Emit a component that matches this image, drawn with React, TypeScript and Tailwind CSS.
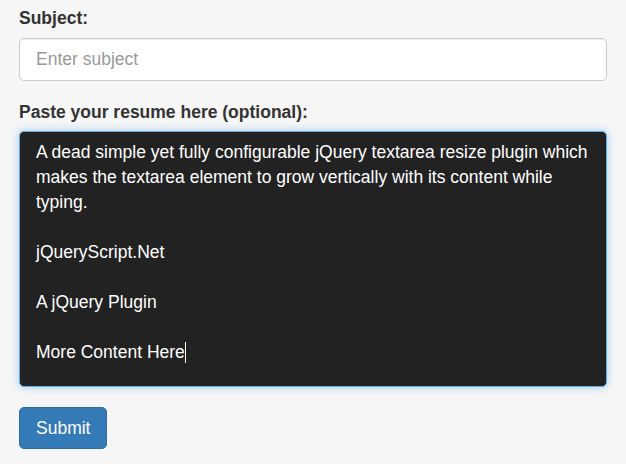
export default function App() {
  return (
    <div
      className="min-h-[464px] w-full bg-[#f6f6f6] px-[19px] pt-[6px] text-[#333333]"
      style={{ fontFamily: '"Liberation Sans", Arial, sans-serif' }}
    >
      <label className="block text-[17.5px] font-bold leading-[25px] mb-[7px]">Subject:</label>
      <div className="h-[43px] w-[588px] rounded-[5px] border border-[#cccccc] bg-white px-[16px] flex items-center text-[17.5px] text-[#999999] shadow-[inset_0_1px_1px_rgba(0,0,0,0.075)]">
        Enter subject
      </div>
      <label className="block text-[17.5px] font-bold leading-[25px] mt-[19px] mb-[6px]">
        Paste your resume here (optional):
      </label>
      <div className="h-[256px] w-[588px] rounded-[5px] border border-[#66afe9] bg-[#222222] px-[16px] pt-[7.5px] text-[17.5px] leading-[25px] text-white shadow-[inset_0_1px_1px_rgba(0,0,0,0.075),0_0_8px_rgba(102,175,233,0.6)]">
        <div className="whitespace-nowrap">A dead simple yet fully configurable jQuery textarea resize plugin which</div>
        <div className="whitespace-nowrap">makes the textarea element to grow vertically with its content while</div>
        <div>typing.</div>
        <div>&nbsp;</div>
        <div>jQueryScript.Net</div>
        <div>&nbsp;</div>
        <div>A jQuery Plugin</div>
        <div>&nbsp;</div>
        <div className="flex items-center">
          <span>More Content Here</span>
          <span className="inline-block w-px h-[21px] bg-white"></span>
        </div>
      </div>
      <button className="mt-[20px] h-[42px] rounded-[5px] border border-[#2e6da4] bg-[#337ab7] px-[16px] text-[17.5px] text-white">
        Submit
      </button>
    </div>
  );
}
